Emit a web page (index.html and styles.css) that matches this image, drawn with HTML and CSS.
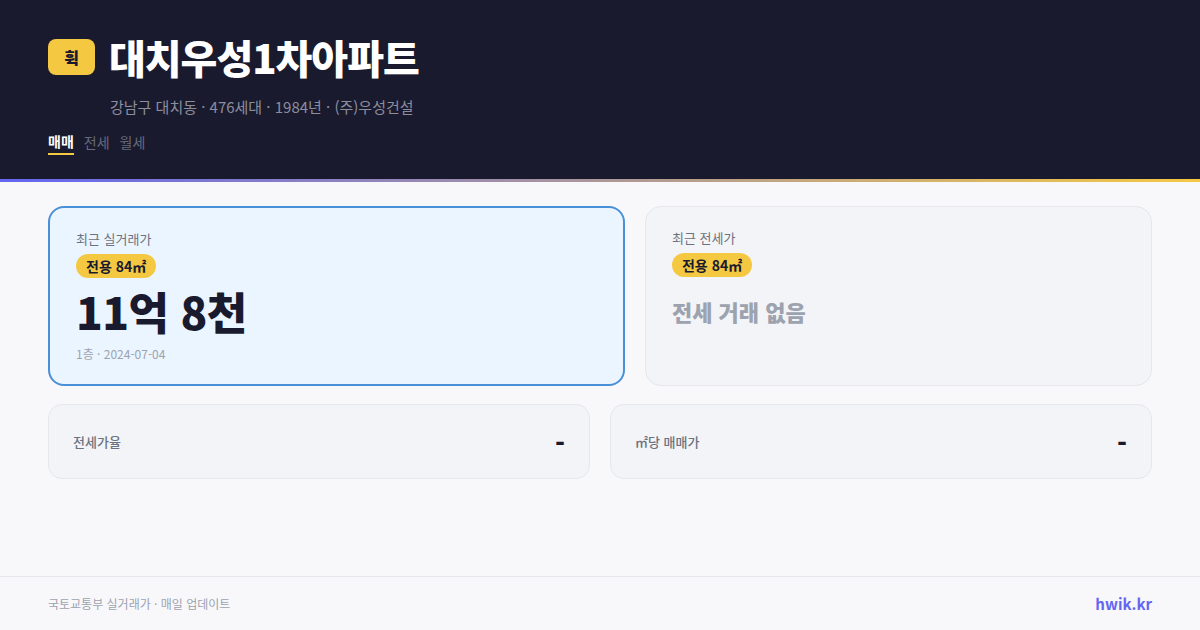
FILE: index.html
```html
<!DOCTYPE html>
<html lang="ko">
<head>
<meta charset="UTF-8">
<title>대치우성1차아파트</title>
<link rel="stylesheet" href="styles.css">
</head>
<body>
    <header class="header">
        <div class="title-row">
            <span class="logo">휙</span>
            <h1 class="title">대치우성1차아파트</h1>
        </div>
        <div class="sub">강남구 대치동 · 476세대 · 1984년 · (주)우성건설</div>
        <div class="tabs">
            <span class="tab active">매매</span>
            <span class="tab">전세</span>
            <span class="tab">월세</span>
        </div>
    </header>
    <div class="accent"></div>
    <main class="main">
        <div class="price-row">
            <div class="card card-sale">
                <div class="card-label">최근 실거래가</div>
                <span class="pill">전용 84㎡</span>
                <div class="price">11억 8천</div>
                <div class="meta">1층 · 2024-07-04</div>
            </div>
            <div class="card card-rent">
                <div class="card-label">최근 전세가</div>
                <span class="pill">전용 84㎡</span>
                <div class="empty">전세 거래 없음</div>
            </div>
        </div>
        <div class="stat-row">
            <div class="stat">
                <span class="stat-label">전세가율</span>
                <span class="stat-value">-</span>
            </div>
            <div class="stat">
                <span class="stat-label">㎡당 매매가</span>
                <span class="stat-value">-</span>
            </div>
        </div>
    </main>
    <footer class="footer">
        <span class="source">국토교통부 실거래가 · 매일 업데이트</span>
        <span class="brand">hwik.kr</span>
    </footer>
</body>
</html>
```

FILE: styles.css
```css
*{
    box-sizing:border-box;
}
html, body{
    margin:0;
    height:100%;
}
body{
    width:1200px;
    height:630px;
    overflow:hidden;
    display:flex;
    flex-direction:column;
    background:#f8f8fb;
    font-family:"Noto Sans CJK KR", "Noto Sans", sans-serif;
    color:#1a1a2e;
}
.header{
    height:179px;
    background:#1a1a2e;
    padding:31px 48px 0;
}
.title-row{
    display:flex;
    align-items:center;
    gap:14px;
}
.logo{
    width:47px;
    height:36px;
    display:flex;
    align-items:center;
    justify-content:center;
    background:#f5c842;
    border-radius:8px;
    font-size:16px;
    font-weight:900;
    color:#1a1a2e;
}
.title{
    margin:0;
    font-size:40px;
    line-height:52px;
    font-weight:900;
    letter-spacing:-1px;
    color:#fff;
}
.sub{
    margin:13px 0 0 62px;
    font-size:15px;
    line-height:22px;
    color:#8b8e9e;
}
.tabs{
    display:flex;
    gap:10px;
    margin-top:14px;
}
.tab{
    font-size:14px;
    line-height:20px;
    padding-bottom:2px;
    color:#666a7a;
}
.tab.active{
    margin-top:-1px;
    color:#fff;
    font-weight:700;
    border-bottom:2px solid #f5c842;
}
.accent{
    height:3px;
    background:linear-gradient(90deg, #6366f1, #f5c842);
}
.main{
    flex:1;
    padding:24px 48px 0;
}
.price-row{
    display:flex;
    gap:20px;
}
.card{
    height:180px;
    border-radius:16px;
    padding:22px 26px;
}
.card-sale{
    flex:1.15;
    background:#ebf5ff;
    border:2px solid #4a90d9;
}
.card-rent{
    flex:1;
    background:#f3f4f7;
    border:1px solid #e5e7eb;
}
.card-label{
    font-size:13px;
    line-height:18px;
    color:#6b7280;
}
.pill{
    display:inline-block;
    margin-top:6px;
    padding:0 10px;
    height:24px;
    line-height:24px;
    border-radius:12px;
    background:#f5c842;
    font-size:14px;
    font-weight:700;
    color:#1a1a2e;
}
.price{
    font-size:44px;
    line-height:60px;
    font-weight:900;
    letter-spacing:-0.5px;
    margin-top:3px;
}
.meta{
    font-size:12px;
    line-height:18px;
    color:#9ca3af;
    margin-top:4px;
}
.empty{
    font-size:22px;
    line-height:32px;
    font-weight:900;
    color:#9ca3af;
    margin-top:18px;
}
.stat-row{
    display:flex;
    gap:20px;
    margin-top:18px;
}
.stat{
    flex:1;
    height:75px;
    display:flex;
    align-items:center;
    justify-content:space-between;
    padding:0 24px;
    background:#f3f4f7;
    border:1px solid #e5e7eb;
    border-radius:14px;
}
.stat-label{
    font-size:13px;
    font-weight:500;
    color:#6b7280;
}
.stat-value{
    font-size:26px;
    font-weight:900;
    color:#1a1a2e;
}
.footer{
    height:54px;
    display:flex;
    align-items:center;
    justify-content:space-between;
    padding:0 48px;
    border-top:1px solid #e5e7eb;
}
.source{
    font-size:12px;
    color:#9ca3af;
}
.brand{
    font-size:15px;
    font-weight:700;
    color:#6366f1;
}
```
